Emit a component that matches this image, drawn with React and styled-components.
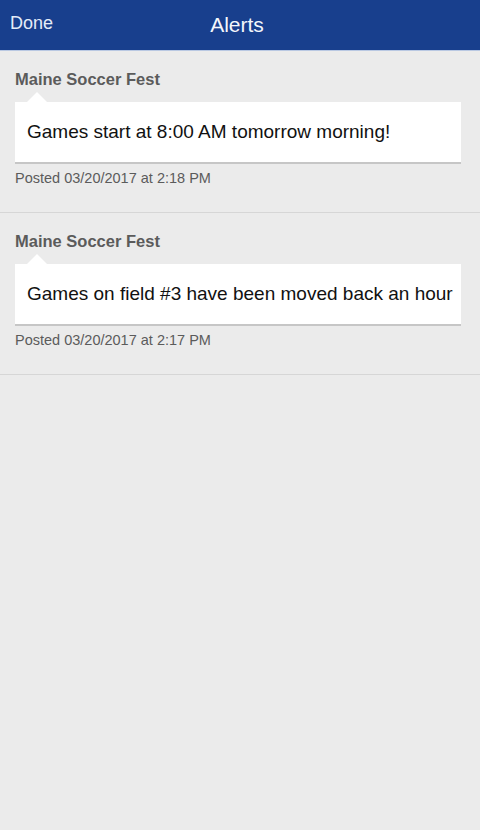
import React from 'react'
import styled, { createGlobalStyle } from 'styled-components';

const alerts = [
  { id: 1, from: 'Maine Soccer Fest', text: 'Games start at 8:00 AM tomorrow morning!', posted: 'Posted 03/20/2017 at 2:18 PM' },
  { id: 2, from: 'Maine Soccer Fest', text: 'Games on field #3 have been moved back an hour', posted: 'Posted 03/20/2017 at 2:17 PM' },
];

const App = () => {
  return (
    <Page>
      <GlobalStyle />
      <Header>
        <Done>Done</Done>
        <Title>Alerts</Title>
      </Header>
      <List>
        {alerts.map(a => (
          <Item key={a.id}>
            <Sender>{a.from}</Sender>
            <Bubble>{a.text}</Bubble>
            <Posted>{a.posted}</Posted>
          </Item>
        ))}
      </List>
    </Page>
  )
}

export default App;

const GlobalStyle = createGlobalStyle`
body {
  margin: 0;
  background: #ebebeb;
  font-family: "Liberation Sans", Arial, sans-serif;
}
`

let Page = styled.div`
min-height: 830px;
background: #ebebeb;
`

let Header = styled.div`
position: relative;
height: 50px;
background: #183f8d;
border-bottom: 1px solid #b9c8e2;
display: flex;
align-items: center;
justify-content: center;
`

let Done = styled.span`
position: absolute;
left: 10px;
top: 13px;
font-size: 18px;
color: #e4ecf8;
`

let Title = styled.h1`
margin: 0 6px 0 0;
font-size: 21px;
font-weight: 400;
color: #f4f7fc;
`

let List = styled.div`
display: flex;
flex-direction: column;
`

let Item = styled.div`
padding: 18px 19px 25px 15px;
border-bottom: 1px solid #d6d6d6;
`

let Sender = styled.div`
font-size: 16.5px;
font-weight: 700;
color: #5b5b5b;
line-height: 20px;
margin-bottom: 13px;
`

let Bubble = styled.div`
position: relative;
background: #fff;
height: 60px;
padding: 0 12px;
display: flex;
align-items: center;
white-space: nowrap;
font-size: 19px;
color: #111;
border-bottom: 2px solid #c6c6c6;
&::before {
  content: '';
  position: absolute;
  left: 12px;
  top: -10px;
  border-left: 10px solid transparent;
  border-right: 10px solid transparent;
  border-bottom: 10px solid #fff;
}
`

let Posted = styled.div`
margin-top: 5px;
font-size: 14.5px;
color: #5b5b5b;
line-height: 18px;
`
